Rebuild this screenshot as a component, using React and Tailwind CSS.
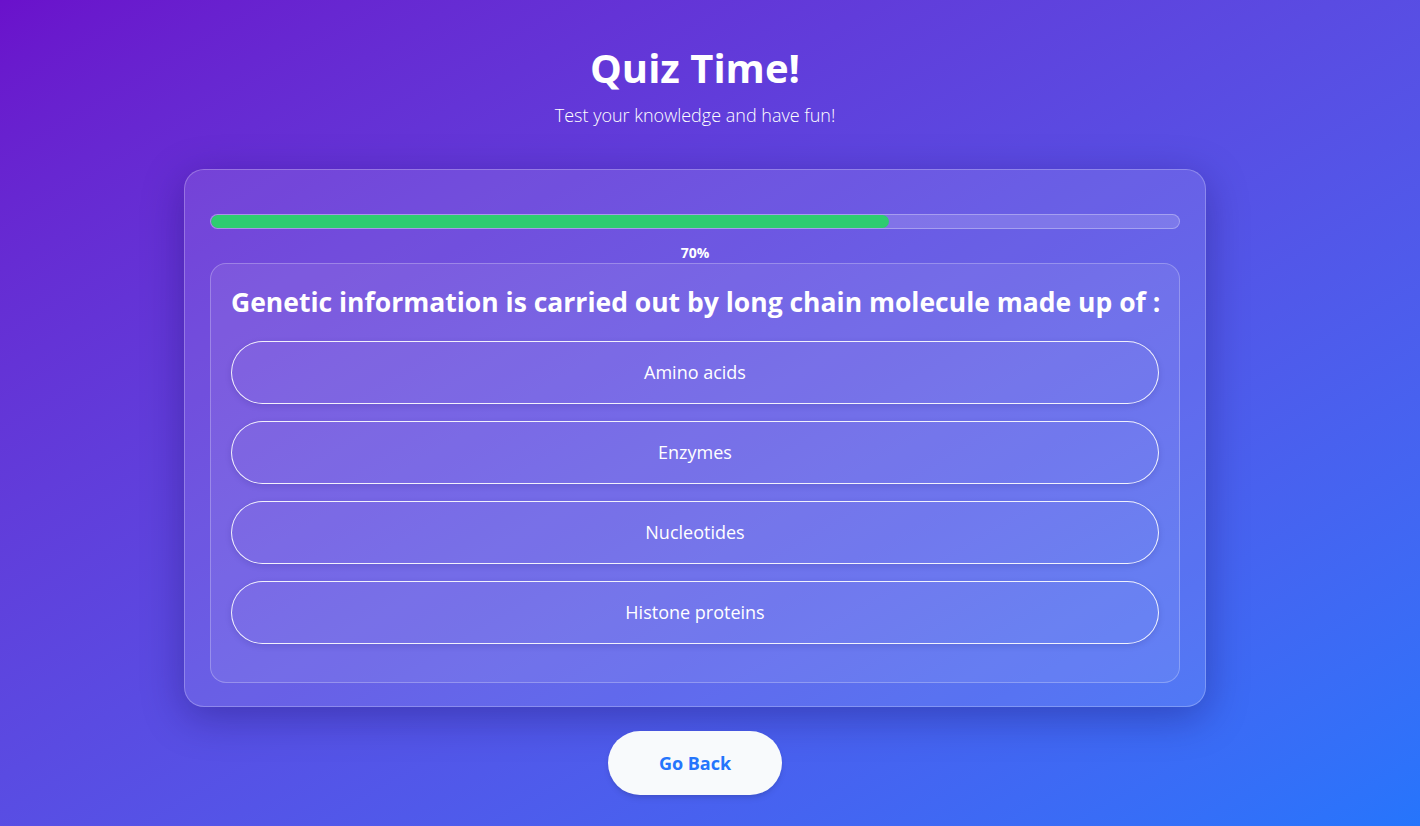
import React from 'react';

const options = ['Amino acids', 'Enzymes', 'Nucleotides', 'Histone proteins'];

function App() {
  const progress = 70;

  return (
    <div className="min-h-screen w-full bg-gradient-to-br from-[#6a11cb] to-[#2575fc] font-['Open_Sans',sans-serif] text-white">
      <div className="w-[1390px] flex flex-col items-center pt-[42px] pb-[31px]">
        {/* Header */}
        <h1 className="text-[40px] leading-[52px] font-bold">Quiz Time!</h1>
        <p className="text-[18px] leading-[26px] font-light mt-[8px]">Test your knowledge and have fun!</p>

        {/* Quiz card */}
        <div className="mt-[41px] w-[1022px] rounded-[20px] border border-white/25 bg-white/10 shadow-[0_10px_40px_rgba(20,10,90,0.35)] px-[25px] pt-[44px] pb-[23px]">
          <div className="h-[15px] w-full rounded-full border border-white/30 bg-white/15 overflow-hidden">
            <div className="h-full rounded-full bg-[#2ecc71]" style={{ width: `${progress}%` }} />
          </div>
          <p className="text-center text-[14px] leading-[20px] font-bold mt-[14px]">{progress}%</p>

          <div className="mt-0 rounded-[16px] border border-white/25 bg-white/[0.08] px-[20px] pt-[20px] pb-[38px]">
            <h2 className="text-[26.5px] leading-[36px] font-bold whitespace-nowrap">
              Genetic information is carried out by long chain molecule made up of :
            </h2>
            <div className="mt-[21px] flex flex-col gap-[17px]">
              {options.map((opt) => (
                <button
                  key={opt}
                  className="h-[63px] w-full rounded-full border border-white/90 bg-white/[0.03] shadow-[0_2px_6px_rgba(30,20,100,0.15)] text-[18px] font-normal text-white"
                >
                  {opt}
                </button>
              ))}
            </div>
          </div>
        </div>

        <button className="mt-[24px] h-[64px] w-[174px] rounded-full bg-[#f8fafc] text-[18px] font-bold text-[#2575fc] shadow-md">
          Go Back
        </button>
      </div>
    </div>
  );
}

export default App;
